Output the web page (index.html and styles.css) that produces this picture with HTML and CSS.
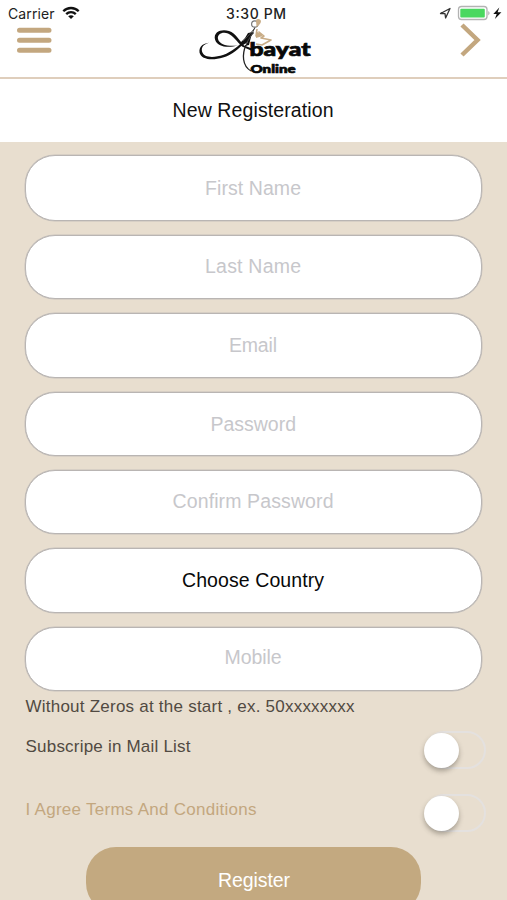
FILE: index.html
```html
<!DOCTYPE html>
<html lang="en">
<head>
<meta charset="utf-8">
<title>New Registeration</title>
<link rel="stylesheet" href="styles.css">
</head>
<body>
<header class="header">
  <div class="status">
    <div class="status-side">
      <svg class="carrier" width="49" height="20"><text x="0" y="12.700" textLength="46.500">Carrier</text></svg>
      <svg class="wifi" width="18" height="14" viewBox="0 0 18 14" fill="none" stroke="#111" stroke-width="2.300"><path d="M1.300 5.200C5.500 .900 12.500 .900 16.700 5.200M4.200 8.100c2.700-2.700 6.900-2.700 9.600 0"/><path d="M6.200 10.300c1.500-1.500 4.100-1.500 5.600 0L9 13z" fill="#111" stroke="none"/></svg>
    </div>
    <svg class="time" width="64" height="20"><text x="1" y="12.700" textLength="60">3:30 PM</text></svg>
    <div class="status-side status-right">
      <svg width="64" height="20" viewBox="439 4 64 20">
        <path d="M440.500 13.500 450 8.500 445.600 18 445 13.700z" fill="none" stroke="#333" stroke-width="1.300" stroke-linejoin="round"/>
        <rect x="458.500" y="6.500" width="28.500" height="13" rx="3" fill="#fff" stroke="#b3b3b3" stroke-width="1.300"/>
        <rect x="460.300" y="8.800" width="24.500" height="8.600" rx="1" fill="#49d85f"/>
        <path d="M488.300 11q2.500 2 0 4.500z" fill="#aaa"/>
        <path d="M499.300 7.500 493.300 14h3.400l-1.800 5 6.500-6.700h-3.800z" fill="#111"/>
      </svg>
    </div>
  </div>
  <svg class="menu" width="36" height="28" viewBox="0 0 36 28" stroke="#c3a77f" stroke-width="5" stroke-linecap="round"><path d="M3.500 4.300H33M3.500 14.300H33M3.500 24.200H33"/></svg>
  <svg class="logo" width="130" height="60" viewBox="192 17 130 60">
    <path fill="#111" d="M212 42.500C204 43 201 47 202 51.500c2 7 13 6 21 3.500 9-3 16-10 22-15l8-8 1 1-8 8c-7 8-14 14-23 16.500-11 3.500-22 2-23.500-5C198.500 46 204 42.500 212 42.500z"/>
    <path fill="#111" d="M238 45.500c-11 3-21 1-23-6-2-8 7-11 14-8.500 7 2.500 10 9 15 14.500l8 3-1 2-9-4c-5-5-9-11-14-13-6-2-11 1-10 5.500 1.500 6 10 7.500 20 6.500z"/>
    <path d="M246 45c-4 9-4 21 5 26" fill="none" stroke="#222" stroke-width="1.300"/>
    <path d="m248 33 5-1-2 5-2 8-4 1 3-4-5 3-3-2 5-5z" fill="#111"/>
    <path d="m255 28-7 8-5 5M255 27l-3 7-6 10" fill="none" stroke="#444" stroke-width="1"/>
    <circle cx="254.800" cy="24" r="3.200" fill="#fff" stroke="#777" stroke-width="1.200"/>
    <path d="M256 20q2-2 4.500 0c1.500 2-1 5-4 7z" fill="#c9ad87"/>
    <path d="m257 29-1 7 5-1-2-3 5 4-3 2 10 2-9 5-6-1" fill="none" stroke="#c9ad87" stroke-width="1.600" stroke-linejoin="round"/>
    <path d="m256 31 7 5-7 2z" fill="#c9ad87"/>
    <text class="logo-main" x="249.500" y="56" textLength="61" lengthAdjust="spacingAndGlyphs">bayat</text>
    <text class="logo-sub" x="250.500" y="73" textLength="45" lengthAdjust="spacingAndGlyphs">Online</text>
  </svg>
  <svg class="next" width="24" height="36" viewBox="0 0 24 36" fill="none" stroke="#c3a77f" stroke-width="4.500"><path d="m3 2 15.500 15L3 32"/></svg>
</header>
<div class="title"><svg width="170" height="30"><text x="3.500" y="20.500" textLength="161">New Registeration</text></svg></div>
<main class="form">
  <div class="field first"><svg width="170" height="30"><text x="37" y="22" textLength="96">First Name</text></svg></div>
  <div class="field"><svg width="170" height="30"><text x="37" y="20.500" textLength="96">Last Name</text></svg></div>
  <div class="field"><svg width="170" height="30"><text x="61" y="20.800" textLength="48">Email</text></svg></div>
  <div class="field"><svg width="170" height="30"><text x="42.500" y="21.500" textLength="85.500">Password</text></svg></div>
  <div class="field"><svg width="170" height="30"><text x="4.500" y="20.800" textLength="161">Confirm Password</text></svg></div>
  <div class="field country"><svg width="170" height="30"><text x="14" y="20.500" textLength="142">Choose Country</text></svg></div>
  <div class="field"><svg width="170" height="30"><text x="56.500" y="20" textLength="57">Mobile</text></svg></div>
  <div class="hint"><svg width="340" height="24"><text x="0.500" y="18" textLength="329">Without Zeros at the start , ex. 50xxxxxxxx</text></svg></div>
  <div class="option"><svg width="240" height="24"><text x="0.500" y="19" textLength="165">Subscripe in Mail List</text></svg><div class="switch"><div class="knob"></div></div></div>
  <div class="option terms"><svg width="240" height="24"><text x="0.500" y="19" textLength="231">I Agree Terms And Conditions</text></svg><div class="switch"><div class="knob"></div></div></div>
  <div class="register"><svg width="80" height="30"><text x="4" y="21.500" textLength="72">Register</text></svg></div>
</main>
</body>
</html>
```
FILE: styles.css
```css
* { box-sizing: border-box; }
body {
  margin: 0;
  height: 900px;
  overflow: hidden;
  background: #e8decf;
  font-family: "Liberation Sans", Arial, sans-serif;
}
svg { display: block; flex: none; }
text { fill: currentColor; }
.header {
  position: relative;
  display: flex;
  justify-content: space-between;
  align-items: flex-start;
  height: 79px;
  padding: 0 24px 0 16px;
  background: #fff;
  border-bottom: 2px solid #dfcebc;
}
.status {
  position: absolute;
  z-index: 1;
  inset: 0 0 auto 0;
  height: 28px;
  padding: 6px 4px 0 8px;
  display: grid;
  grid-template-columns: 217px 64px 1fr;
  color: #222;
  font-family: Inter, "Liberation Sans", sans-serif;
  font-size: 14px;
}
.status-side { display: flex; gap: 5px; }
.status-right { justify-content: flex-end; margin-top: -2px; }
.time { font-weight: 500; }
.menu { margin-top: 26px; }
.logo { margin: 17px 0 0 3px; }
.logo text { font-family: Lato, "Open Sans", sans-serif; font-weight: 900; fill: #080808; stroke: #080808; stroke-width: .7px; }
.logo .logo-main { font-size: 19px; }
.logo .logo-sub { font-size: 11.5px; }
.next { margin-top: 23px; }
.title {
  height: 63px;
  padding-top: 17px;
  display: flex;
  justify-content: center;
  align-items: flex-start;
  background: #fff;
  color: #111;
  font-size: 19.5px;
}
.form { padding: 13px 25.5px 0 25px; }
.field {
  height: 64.3px;
  margin-bottom: 14px;
  display: flex;
  justify-content: center;
  align-items: center;
  border: 1px solid #b9b5b3;
  border-radius: 30px;
  background: #fff;
  box-shadow: 0 0 0 .5px #c5c0bb;
  color: #c7c7cb;
  font-size: 19.5px;
}
.first { height: 66.2px; }
.country { color: #080808; }
.hint { height: 28px; margin-top: -10.7px; color: #514a42; font-size: 17px; }
.option {
  height: 63px;
  display: flex;
  justify-content: space-between;
  align-items: flex-start;
  padding-top: 11px;
  color: #514a42;
  font-size: 17px;
}
.terms { color: #c3a77f; }
.switch {
  width: 61px;
  height: 38px;
  margin: -2px -4px 0 0;
  border: 2px solid #e4e1df;
  border-radius: 19px;
}
.knob {
  width: 35px;
  height: 35px;
  margin: -.5px 0 0 -3px;
  border-radius: 50%;
  background: #fff;
  box-shadow: 0 3px 5px rgba(70, 65, 55, .4);
}
.register {
  width: 335px;
  height: 66px;
  margin: -1px 0 0 61.3px;
  display: flex;
  justify-content: center;
  align-items: center;
  border-radius: 30px;
  background: #c3a980;
  color: #fff;
  font-size: 19.5px;
}
```
